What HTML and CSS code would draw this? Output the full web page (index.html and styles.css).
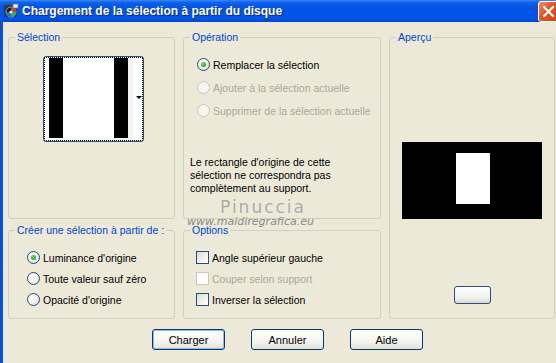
FILE: index.html
```html
<!DOCTYPE html>
<html lang="fr">
<head>
<meta charset="utf-8">
<title>Chargement de la sélection à partir du disque</title>
<link rel="stylesheet" href="styles.css">
</head>
<body>
<div class="win">
  <div class="titlebar">
    <svg class="appicon" width="16" height="16" viewBox="0 0 16 16">
      <rect x="1" y="2" width="13" height="12" rx="2" fill="#2a3a48"/>
      <circle cx="8" cy="9" r="5" fill="#1b1f24" stroke="#7fa0b8" stroke-width="1"/>
      <path d="M8 4 A5 5 0 0 1 13 9 L8 9 Z" fill="#d63a2a"/>
      <path d="M13 9 A5 5 0 0 1 8 14 L8 9 Z" fill="#2fb04a"/>
      <path d="M8 14 A5 5 0 0 1 3 9 L8 9 Z" fill="#2a6fd6"/>
      <circle cx="8" cy="9" r="1.6" fill="#e8e8e8"/>
      <rect x="10" y="1" width="5" height="4" fill="#f2f2f2" stroke="#6b7b88" stroke-width="0.8"/>
    </svg>
    <span class="title">Chargement de la sélection à partir du disque</span>
    <div class="close">
      <svg width="13" height="13" viewBox="0 0 13 13"><path d="M2 2 L11 11 M11 2 L2 11" stroke="#fff" stroke-width="2.2" stroke-linecap="round"/></svg>
    </div>
  </div>
  <div class="body">
    <div class="groups">
      <fieldset class="grp g-sel">
        <legend>Sélection</legend>
        <div class="inner">
          <div class="thumb">
            <div class="thumb-img">
              <span class="bar-black w14"></span><span class="bar-white w51"></span><span class="bar-black w14"></span><span class="bar-white w5"></span>
            </div>
            <span class="thumb-arrow"></span>
          </div>
        </div>
      </fieldset>

      <fieldset class="grp g-op">
        <legend>Opération</legend>
        <div class="inner">
          <div class="opts">
            <div class="opt"><span class="radio checked"></span><span>Remplacer la sélection</span></div>
            <div class="opt disabled"><span class="radio"></span><span>Ajouter à la sélection actuelle</span></div>
            <div class="opt disabled"><span class="radio"></span><span>Supprimer de la sélection actuelle</span></div>
          </div>
          <p class="note">Le rectangle d'origine de cette<br>sélection ne correspondra pas<br>complètement au support.</p>
        </div>
      </fieldset>

      <fieldset class="grp g-prev">
        <legend>Aperçu</legend>
        <div class="inner">
          <div class="preview"><span class="preview-white"></span></div>
          <div class="small-btn"></div>
        </div>
      </fieldset>

      <fieldset class="grp g-create">
        <legend>Créer une sélection à partir de :</legend>
        <div class="inner">
          <div class="opts rows21">
            <div class="opt"><span class="radio checked"></span><span>Luminance d'origine</span></div>
            <div class="opt"><span class="radio"></span><span>Toute valeur sauf zéro</span></div>
            <div class="opt"><span class="radio"></span><span>Opacité d'origine</span></div>
          </div>
        </div>
      </fieldset>

      <fieldset class="grp g-opt">
        <legend>Options</legend>
        <div class="inner">
          <div class="opts rows21">
            <div class="opt"><span class="check"></span><span>Angle supérieur gauche</span></div>
            <div class="opt disabled"><span class="check"></span><span>Couper selon support</span></div>
            <div class="opt"><span class="check"></span><span>Inverser la sélection</span></div>
          </div>
        </div>
      </fieldset>
    </div>

    <div class="buttons">
      <button class="btn default">Charger</button>
      <button class="btn">Annuler</button>
      <button class="btn">Aide</button>
    </div>

    <div class="watermark">
      <div class="wm-name">Pinuccia</div>
      <div class="wm-url">www.maidiregrafica.eu</div>
    </div>
  </div>
</div>
</body>
</html>
```

FILE: styles.css
```css
* { box-sizing: border-box; }
html, body { margin: 0; padding: 0; }
body {
  width: 556px;
  height: 363px;
  overflow: hidden;
  background: #ECE9D8;
  font-family: "Liberation Sans", Arial, sans-serif;
  font-size: 10.5px;
  color: #000;
}

.win { width: 556px; height: 363px; display: flex; flex-direction: column; }

.titlebar {
  height: 22px;
  flex-shrink: 0;
  display: flex;
  align-items: center;
  overflow: hidden;
  background: linear-gradient(#3b8cf7 0px, #1466ec 2px, #0658e6 5px, #0054e3 12px, #0056e8 18px, #0046d0 22px);
  padding-left: 3px;
}
.appicon { flex-shrink: 0; margin-right: 3px; }
.title {
  color: #fff;
  font-weight: bold;
  font-size: 12px;
  text-shadow: 1px 1px 0 #0a2a8a;
  white-space: nowrap;
  flex: 1;
}
.close {
  flex-shrink: 0;
  width: 21px;
  height: 21px;
  margin-right: -3px;
  border: 1px solid #fff;
  border-radius: 3px;
  background: linear-gradient(135deg, #f08e6e 0%, #e2592f 40%, #cf3f14 100%);
  display: flex;
  align-items: center;
  justify-content: center;
}

.body {
  flex: 1;
  position: relative;
  border-left: 3px solid #0a4fd8;
  padding: 8px 0 0 5px;
}

.groups {
  display: grid;
  grid-template-columns: 167px 198px 166px;
  grid-template-rows: 189px 96px;
  column-gap: 8px;
  row-gap: 4px;
}

.grp {
  margin: 0;
  padding: 0;
  min-width: 0;
  border: 1px solid #d0d0bf;
  border-radius: 3px;
}
.grp legend {
  margin-left: 6px;
  padding: 0 2px;
  line-height: 14px;
  color: #0046d5;
  white-space: nowrap;
}

.g-sel { grid-column: 1; grid-row: 1; }
.g-op { grid-column: 2; grid-row: 1; }
.g-prev { grid-column: 3; grid-row: 1 / span 2; }
.g-create { grid-column: 1; grid-row: 2; }
.g-opt { grid-column: 2; grid-row: 2; }

.g-sel .inner { padding: 12px 0 0 34px; }
.g-op .inner { padding: 9px 0 0 13px; }
.g-prev .inner { display: flex; flex-direction: column; align-items: center; }
.g-create .inner { padding: 10px 0 0 18px; }
.g-opt .inner { padding: 10px 0 0 12px; }

/* thumbnail */
.thumb {
  position: relative;
  width: 101px;
  height: 86px;
  border: 1px solid #2c4d7c;
  border-radius: 3px;
  background: #fff;
  padding: 1px 0 0 5px;
}
.thumb::before {
  content: "";
  position: absolute;
  inset: 0;
  border: 1px dotted #000;
}
.thumb-img { display: flex; height: 80px; }
.bar-black { background: #000; }
.bar-white { background: #fff; }
.w14 { width: 14px; }
.w51 { width: 51px; }
.w5 { width: 5px; background: #f4f4f4; }
.thumb-arrow {
  position: absolute;
  left: 92px;
  top: 39px;
  width: 0; height: 0;
  border-left: 3px solid transparent;
  border-right: 3px solid transparent;
  border-top: 3px solid #000;
}

/* options */
.opts { display: flex; flex-direction: column; }
.opt { display: flex; align-items: center; height: 23px; gap: 3px; white-space: nowrap; }
.rows21 .opt { height: 21px; }
.opt.disabled { color: #aca899; }

.radio {
  flex-shrink: 0;
  width: 13px;
  height: 13px;
  border-radius: 50%;
  border: 1px solid #1c5180;
  background: radial-gradient(circle at 35% 35%, #ffffff 0%, #f4f3ee 45%, #d8d7d0 100%);
  display: flex;
  align-items: center;
  justify-content: center;
}
.radio.checked::after {
  content: "";
  width: 5px;
  height: 5px;
  border-radius: 50%;
  background: radial-gradient(circle at 40% 40%, #6be56a 0%, #28b025 60%, #1a8a18 100%);
}
.disabled .radio { border-color: #cac8bb; background: #f6f5ee; }

.check {
  flex-shrink: 0;
  width: 13px;
  height: 13px;
  border: 1px solid #1c5180;
  background: linear-gradient(135deg, #dcdcd7 0%, #f2f2ee 60%, #ffffff 100%);
}
.disabled .check { border-color: #cac8bb; background: #fff; }

.note {
  margin: 34px 0 0 -7px;
  line-height: 13px;
}

/* preview */
.preview {
  margin-top: 98px;
  width: 140px;
  height: 77px;
  background: #000;
  display: flex;
  justify-content: center;
  padding-top: 11px;
  padding-left: 2px;
}
.preview-white { width: 34px; height: 51px; background: #fff; }
.small-btn {
  margin-top: 67px;
  width: 37px;
  height: 18px;
  border: 1px solid #2c4d7c;
  border-radius: 3px;
  background: linear-gradient(#ffffff, #f0f0ea 70%, #d8d8d0);
}

/* buttons */
.buttons {
  display: flex;
  gap: 26px;
  margin-top: 10px;
  padding-left: 144px;
}
.btn {
  width: 73px;
  height: 21px;
  padding: 0;
  font-family: "Liberation Sans", Arial, sans-serif;
  font-size: 11px;
  color: #000;
  border: 1px solid #003c74;
  border-radius: 3px;
  background: linear-gradient(#ffffff 0%, #f5f4ef 60%, #e3e1d6 100%);
}
.btn.default { box-shadow: inset 0 0 0 1px #98b8ea; }

/* watermark overlay */
.watermark {
  position: absolute;
  left: 184px;
  top: 177px;
  pointer-events: none;
}
.wm-name {
  margin-left: 33px;
  font-family: "DejaVu Sans", sans-serif;
  font-size: 17px;
  letter-spacing: 2px;
  color: #a8a8a8;
  text-shadow: 0 0 1px #fff;
  line-height: 16px;
}
.wm-url {
  font-family: "DejaVu Sans", sans-serif;
  font-style: italic;
  font-size: 11px;
  color: #8a8a8a;
  line-height: 11px;
  margin-top: 1px;
}
```
